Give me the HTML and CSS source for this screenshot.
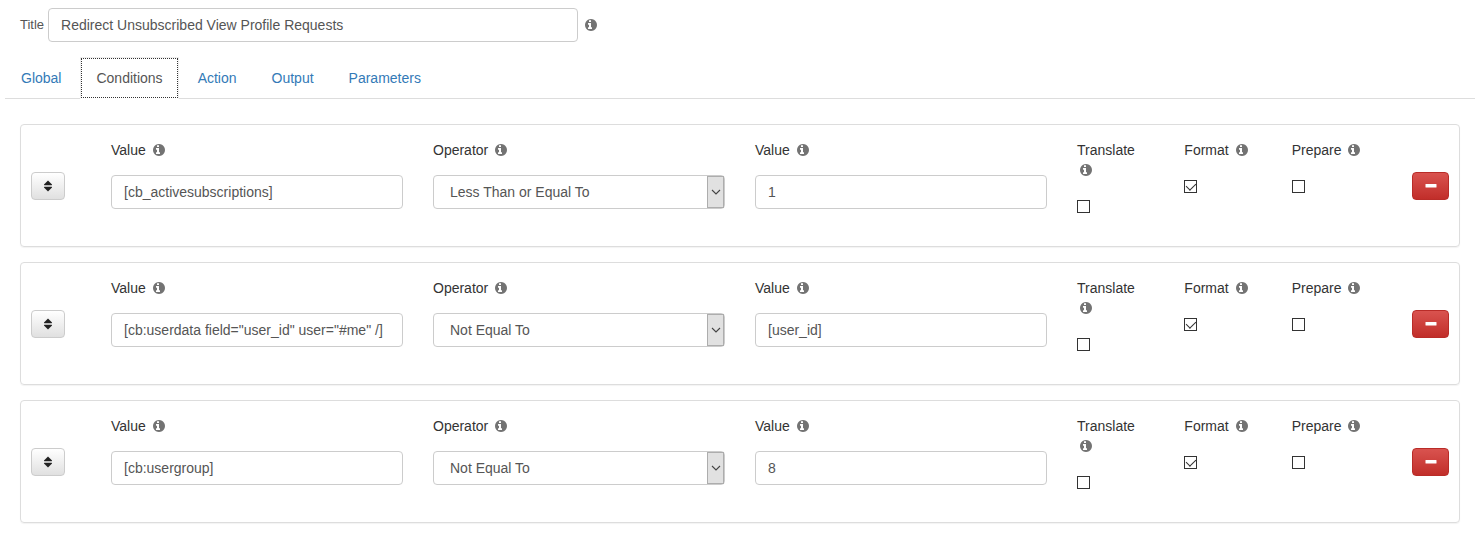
FILE: index.html
```html
<!doctype html>
<html lang="en">
<head>
	<meta charset="UTF-8">
	<title>Redirect Unsubscribed View Profile Requests</title>
	<link rel="stylesheet" href="styles.css">
</head>
<body>
	<svg class="sprite" aria-hidden="true">
		<symbol id="info" viewBox="128 128 1536 1536">
			<path d="M1024 1376v-160q0-14-9-23t-23-9h-96v-512q0-14-9-23t-23-9h-320q-14 0-23 9t-9 23v160q0 14 9 23t23 9h96v320h-96q-14 0-23 9t-9 23v160q0 14 9 23t23 9h448q14 0 23-9t9-23zm-128-896v-160q0-14-9-23t-23-9h-192q-14 0-23 9t-9 23v160q0 14 9 23t23 9h192q14 0 23-9t9-23zm768 416q0 209-103 385.5t-279.5 279.5-385.5 103-385.5-103-279.5-279.5-103-385.5 103-385.5 279.5-279.5 385.5-103 385.5 103 279.5 279.5 103 385.5z"/>
		</symbol>
		<symbol id="sort" viewBox="0 0 10 12">
			<path d="M5 0.5L9 4.5q0.3 0.7-0.5 0.7h-7q-0.8 0-0.5-0.7zM5 11.5L9 7.5q0.3-0.7-0.5-0.7h-7q-0.8 0-0.5 0.7z"/>
		</symbol>
		<symbol id="minus" viewBox="0 0 12 12">
			<rect x="0.5" y="4" width="11" height="3.5" rx="0.6"/>
		</symbol>
		<symbol id="arrow" viewBox="0 0 10 10">
			<path d="M1 3l4 4 4-4" fill="none" stroke="#444" stroke-width="1.1"/>
		</symbol>
	</svg>

	<form>
		<div class="title">
			<label for="title">Title</label>
			<input class="text" type="text" id="title" value="Redirect Unsubscribed View Profile Requests">
			<svg class="info"><use href="#info"/></svg>
		</div>

		<ul class="tabs">
			<li><a href="#global">Global</a></li>
			<li class="active"><a href="#conditions">Conditions</a></li>
			<li><a href="#action">Action</a></li>
			<li><a href="#output">Output</a></li>
			<li><a href="#parameters">Parameters</a></li>
		</ul>

		<div class="conditions">
			<div class="row">
				<div class="move"><button type="button" class="btn" aria-label="Move"><svg><use href="#sort"/></svg></button></div>
				<div class="fields">
					<div class="field wide">
						<label for="left1">Value <svg class="info"><use href="#info"/></svg></label>
						<input class="text" type="text" id="left1" value="[cb_activesubscriptions]">
					</div>
					<div class="field wide">
						<label for="operator1">Operator <svg class="info"><use href="#info"/></svg></label>
						<div class="select">
							<select id="operator1">
								<option>Equal To</option>
								<option>Not Equal To</option>
								<option selected>Less Than or Equal To</option>
							</select>
							<span class="arrow"><svg><use href="#arrow"/></svg></span>
						</div>
					</div>
					<div class="field wide">
						<label for="right1">Value <svg class="info"><use href="#info"/></svg></label>
						<input class="text" type="text" id="right1" value="1">
					</div>
					<div class="field">
						<label for="translate1">Translate <svg class="info"><use href="#info"/></svg></label>
						<input type="checkbox" id="translate1">
					</div>
					<div class="field">
						<label for="format1">Format <svg class="info"><use href="#info"/></svg></label>
						<input type="checkbox" id="format1" checked>
					</div>
					<div class="field">
						<label for="prepare1">Prepare <svg class="info"><use href="#info"/></svg></label>
						<input type="checkbox" id="prepare1">
					</div>
				</div>
				<div class="remove"><button type="button" class="btn danger" aria-label="Remove"><svg><use href="#minus"/></svg></button></div>
			</div>

			<div class="row">
				<div class="move"><button type="button" class="btn" aria-label="Move"><svg><use href="#sort"/></svg></button></div>
				<div class="fields">
					<div class="field wide">
						<label for="left2">Value <svg class="info"><use href="#info"/></svg></label>
						<input class="text" type="text" id="left2" value="[cb:userdata field=&quot;user_id&quot; user=&quot;#me&quot; /]">
					</div>
					<div class="field wide">
						<label for="operator2">Operator <svg class="info"><use href="#info"/></svg></label>
						<div class="select">
							<select id="operator2">
								<option>Equal To</option>
								<option selected>Not Equal To</option>
								<option>Less Than or Equal To</option>
							</select>
							<span class="arrow"><svg><use href="#arrow"/></svg></span>
						</div>
					</div>
					<div class="field wide">
						<label for="right2">Value <svg class="info"><use href="#info"/></svg></label>
						<input class="text" type="text" id="right2" value="[user_id]">
					</div>
					<div class="field">
						<label for="translate2">Translate <svg class="info"><use href="#info"/></svg></label>
						<input type="checkbox" id="translate2">
					</div>
					<div class="field">
						<label for="format2">Format <svg class="info"><use href="#info"/></svg></label>
						<input type="checkbox" id="format2" checked>
					</div>
					<div class="field">
						<label for="prepare2">Prepare <svg class="info"><use href="#info"/></svg></label>
						<input type="checkbox" id="prepare2">
					</div>
				</div>
				<div class="remove"><button type="button" class="btn danger" aria-label="Remove"><svg><use href="#minus"/></svg></button></div>
			</div>

			<div class="row">
				<div class="move"><button type="button" class="btn" aria-label="Move"><svg><use href="#sort"/></svg></button></div>
				<div class="fields">
					<div class="field wide">
						<label for="left3">Value <svg class="info"><use href="#info"/></svg></label>
						<input class="text" type="text" id="left3" value="[cb:usergroup]">
					</div>
					<div class="field wide">
						<label for="operator3">Operator <svg class="info"><use href="#info"/></svg></label>
						<div class="select">
							<select id="operator3">
								<option>Equal To</option>
								<option selected>Not Equal To</option>
								<option>Less Than or Equal To</option>
							</select>
							<span class="arrow"><svg><use href="#arrow"/></svg></span>
						</div>
					</div>
					<div class="field wide">
						<label for="right3">Value <svg class="info"><use href="#info"/></svg></label>
						<input class="text" type="text" id="right3" value="8">
					</div>
					<div class="field">
						<label for="translate3">Translate <svg class="info"><use href="#info"/></svg></label>
						<input type="checkbox" id="translate3">
					</div>
					<div class="field">
						<label for="format3">Format <svg class="info"><use href="#info"/></svg></label>
						<input type="checkbox" id="format3" checked>
					</div>
					<div class="field">
						<label for="prepare3">Prepare <svg class="info"><use href="#info"/></svg></label>
						<input type="checkbox" id="prepare3">
					</div>
				</div>
				<div class="remove"><button type="button" class="btn danger" aria-label="Remove"><svg><use href="#minus"/></svg></button></div>
			</div>
		</div>
	</form>
</body>
</html>
```

FILE: styles.css
```css
*{
	box-sizing: border-box;
}
body{
	margin: 0;
	padding: 8px 1px 8px 5px;
	background: #fff;
	color: #333;
	font: 14px/20px "Liberation Sans", Arial, sans-serif;
}
.sprite{
	position: absolute;
	width: 0;
	height: 0;
}
.info{
	width: 12px;
	height: 12px;
	margin: 0 3px;
	vertical-align: -1px;
	fill: #737373;
}

/* title */
.title{
	display: flex;
	align-items: center;
	gap: 4px;
	padding-left: 15px;
	margin-bottom: 15px;
}
.title label{
	color: #555;
	font-size: 13px;
}
.title .text{
	width: 530px;
}
.text,select{
	display: block;
	width: 100%;
	height: 34px;
	padding: 6px 12px;
	border: 1px solid #ccc;
	border-radius: 4px;
	background: #fff;
	color: #555;
	font: inherit;
}

/* tabs */
.tabs{
	display: flex;
	gap: 3px;
	margin: 0 0 25px;
	padding: 0;
	border-bottom: 1px solid #ddd;
	list-style: none;
}
.tabs li{
	margin-bottom: -1px;
}
.tabs a{
	display: block;
	padding: 10px 15px;
	border: 1px solid transparent;
	color: #337ab7;
	text-decoration: none;
}
.tabs .active a{
	border-color: #eee;
	border-bottom-color: #fff;
	background: #fff;
	color: #555;
	outline: 1px dotted #333;
	outline-offset: -2px;
}

/* conditions */
.conditions{
	display: flex;
	flex-direction: column;
	gap: 15px;
	padding: 0 15px;
}
.row{
	display: grid;
	grid-template-columns: 75px 1fr 75px;
	align-items: center;
	border: 1px solid #ddd;
	border-radius: 4px;
	box-shadow: 0 1px 1px rgba(0,0,0,.05);
}
.fields{
	display: grid;
	grid-template-columns: repeat(12, 1fr);
	column-gap: 30px;
	align-items: start;
	padding: 15px 15px 33px;
}
.wide{
	grid-column: span 3;
}
.field label{
	display: block;
	margin-bottom: 15px;
}
.select{
	position: relative;
}
select{
	appearance: none;
	padding: 6px 30px 6px 16px;
}
.arrow{
	position: absolute;
	top: 1px;
	right: 1px;
	display: flex;
	align-items: center;
	justify-content: center;
	width: 17px;
	height: 32px;
	border: 1px solid #adadad;
	background: #e1e1e1;
	pointer-events: none;
}
.arrow svg{
	width: 10px;
	height: 10px;
}
input[type=checkbox]{
	display: block;
	appearance: none;
	width: 13px;
	height: 13px;
	margin: 20px 0 0;
	border: 1px solid #333;
	background: #fff;
}
input[type=checkbox]:checked::before{
	content: "";
	display: block;
	width: 5px;
	height: 8px;
	margin: 0 0 0 3px;
	border: solid #333;
	border-width: 0 1px 1px 0;
	transform: rotate(45deg);
}

/* buttons */
.move{
	padding-left: 10px;
}
.remove{
	padding-right: 10px;
	text-align: right;
}
.btn{
	display: inline-flex;
	align-items: center;
	justify-content: center;
	width: 34px;
	height: 28px;
	padding: 0;
	border: 1px solid #ccc;
	border-radius: 4px;
	background: linear-gradient(#fff, #e0e0e0);
	vertical-align: middle;
	fill: #222;
}
.btn svg{
	width: 10px;
	height: 12px;
}
.danger{
	width: 37px;
	border-color: #b92c28;
	background: linear-gradient(#d9534f, #c12e2a);
	fill: #fff;
}
.danger svg{
	width: 12px;
}
```
